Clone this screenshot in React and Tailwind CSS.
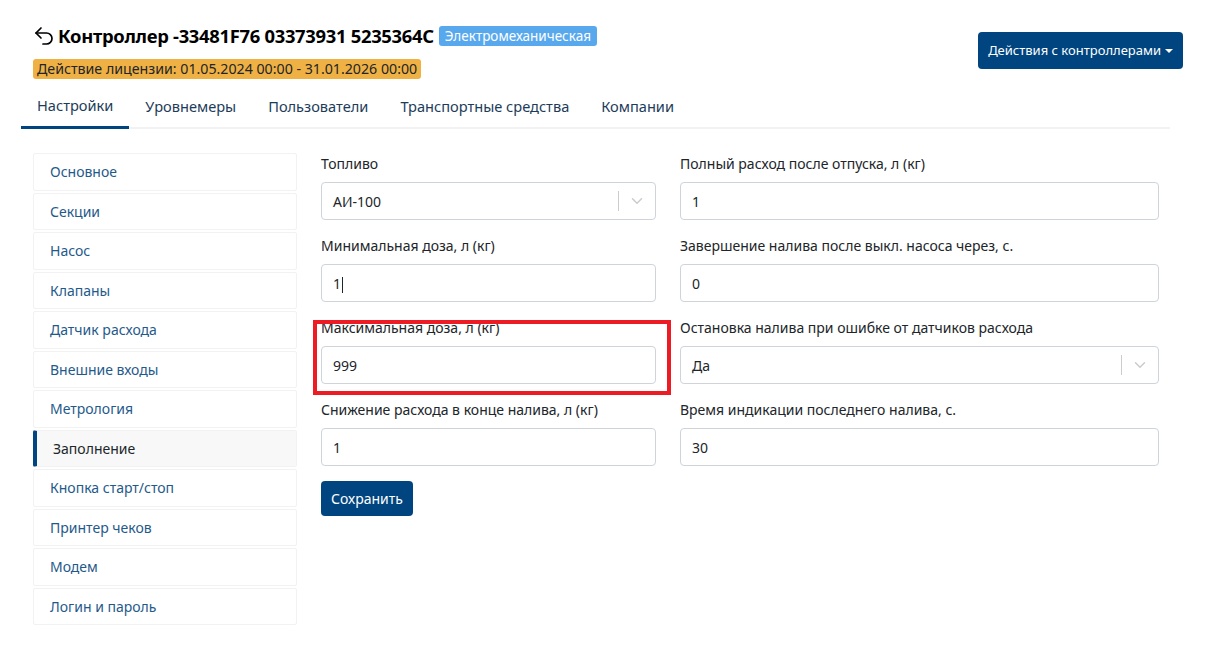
import { Undo2, ChevronDown } from "lucide-react";

const menu = [
  "Основное",
  "Секции",
  "Насос",
  "Клапаны",
  "Датчик расхода",
  "Внешние входы",
  "Метрология",
  "Заполнение",
  "Кнопка старт/стоп",
  "Принтер чеков",
  "Модем",
  "Логин и пароль",
];

const tabs = ["Настройки", "Уровнемеры", "Пользователи", "Транспортные средства", "Компании"];

function Field({ label, value, select, caret }) {
  return (
    <div className="flex flex-col">
      <label className="text-[14px] text-[#212529] leading-[20px] h-[20px]">{label}</label>
      <div className="mt-[8px] h-[38px] border border-[#ced4da] rounded-[4px] bg-white flex items-center pl-[11px]">
        <span className="flex-1 text-[14px] text-[#212529]">
          {value}
          {caret && <span className="inline-block w-px h-[16px] bg-[#212529] align-middle ml-px" />}
        </span>
        {select && (
          <div className="flex items-center h-full">
            <div className="w-px h-[20px] bg-[#cccccc]" />
            <div className="w-[36px] flex justify-center text-[#cccccc]">
              <ChevronDown size={18} strokeWidth={2} />
            </div>
          </div>
        )}
      </div>
    </div>
  );
}

export default function App() {
  return (
    <div
      className="w-[1213px] h-[657px] bg-white relative overflow-hidden"
      style={{ fontFamily: '"Noto Sans", sans-serif' }}
    >
      {/* Header */}
      <div className="flex justify-between pl-[33px] pr-[30px] pt-[24px]">
        <div className="flex flex-col">
          <div className="flex items-center">
            <Undo2 size={24} strokeWidth={1.7} className="text-black -ml-[1px]" />
            <h1 className="text-[18.4px] font-bold text-black tracking-[-0.3px] leading-[24px] ml-[2px]">
              Контроллер -33481F76 03373931 5235364C
            </h1>
            <span className="ml-[5px] bg-[#58a8ee] text-white text-[13.5px] leading-[20px] px-[6px] rounded-[3px]">
              Электромеханическая
            </span>
          </div>
          <div className="mt-[8px]">
            <span className="inline-block bg-[#f0b144] text-[#212529] text-[14.2px] leading-[20px] px-[4px] rounded-[3px]">
              Действие лицензии: 01.05.2024 00:00 - 31.01.2026 00:00
            </span>
          </div>
        </div>
        <button className="mt-[8px] h-[37px] bg-[#00457f] text-white text-[13px] px-[10px] rounded-[4px] flex items-center">
          Действия с контроллерами
          <span className="ml-[4px] inline-block w-0 h-0 border-l-[4px] border-r-[4px] border-t-[4px] border-l-transparent border-r-transparent border-t-white" />
        </button>
      </div>

      {/* Tabs */}
      <div className="mx-[21px] mt-[5px] w-[1149px] flex border-b-2 border-[#f2f2f2]">
        {tabs.map((t, i) => (
          <div
            key={t}
            className={`px-[16px] h-[44px] flex items-center text-[14.6px] -mb-[2px] ${
              i === 0 ? "text-[#1d3c5a] border-b-[3px] border-[#00457f]" : "text-[#1d3c5a]"
            }`}
          >
            {t}
          </div>
        ))}
      </div>

      {/* Body */}
      <div className="flex pl-[33px] pt-[24px]">
        <div className="w-[264px] flex flex-col gap-[2px]">
          {menu.map((m) => {
            const active = m === "Заполнение";
            return (
              <div
                key={m}
                className={`h-[37.5px] flex items-center border border-[#f2f2f2] rounded-[2px] text-[14px] ${
                  active
                    ? "bg-[#f8f8f8] text-[#212529] pl-[16px] border-l-[4px] border-l-[#00457f]"
                    : "bg-white text-[#1f5a8a] pl-[16px]"
                }`}
              >
                {m}
              </div>
            );
          })}
        </div>

        <div className="ml-[24px] w-[838px] pt-[1px]">
          <div className="grid grid-cols-[335px_479px] gap-x-[24px] gap-y-[16px]">
            <Field label="Топливо" value="АИ-100" select />
            <Field label="Полный расход после отпуска, л (кг)" value="1" />
            <Field label="Минимальная доза, л (кг)" value="1" caret />
            <Field label="Завершение налива после выкл. насоса через, с." value="0" />
            <Field label="Максимальная доза, л (кг)" value="999" />
            <Field label="Остановка налива при ошибке от датчиков расхода" value="Да" select />
            <Field label="Снижение расхода в конце налива, л (кг)" value="1" />
            <Field label="Время индикации последнего налива, с." value="30" />
          </div>
          <button className="mt-[15px] h-[35px] px-[10px] bg-[#00457f] text-white text-[14px] rounded-[4px]">
            Сохранить
          </button>
        </div>
      </div>

      {/* Annotation highlight */}
      <div className="absolute left-[313px] top-[320px] w-[358px] h-[75px] border-[4px] border-[#ed1c24] pointer-events-none" />
    </div>
  );
}
